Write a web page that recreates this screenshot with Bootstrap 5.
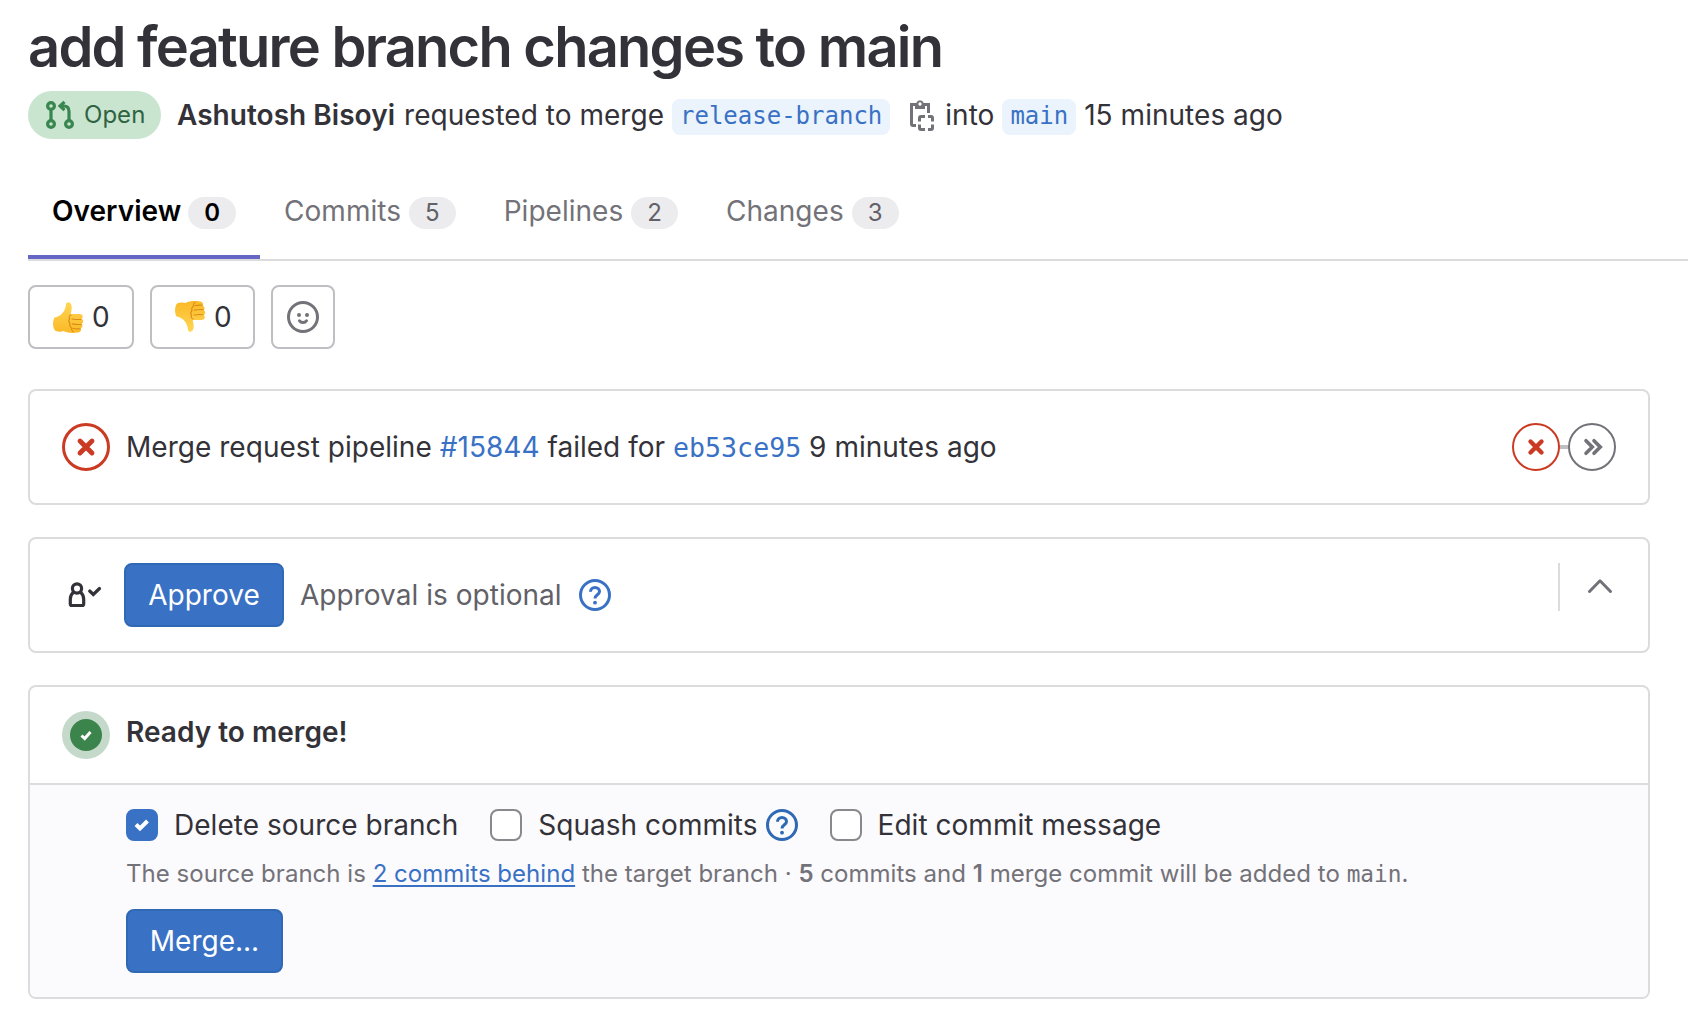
<!DOCTYPE html>
<html lang="en">
<head>
<meta charset="utf-8">
<title>add feature branch changes to main</title>
<meta name="viewport" content="width=device-width, initial-scale=1">
<link href="https://cdn.jsdelivr.net/npm/bootstrap@5.3.0/dist/css/bootstrap.min.css" rel="stylesheet">
<style>
  body { font-family: Inter, "Liberation Sans", sans-serif; font-size: 28px; line-height: 40px; letter-spacing: .03px; color: #333238; background: #fff; overflow: hidden; }
  svg { display: block; flex: none; }
  a { color: #3971c5; text-decoration: none; }
  .page { padding-left: 28px; }
  .code-face { font-family: "DejaVu Sans Mono", monospace; letter-spacing: 0; }
  .mr-title { font-size: 56px; line-height: 64px; font-weight: 600; letter-spacing: -1.76px; padding-top: 15px; margin: 0 0 12px; }
  .state-pill { height: 48px; width: 133px; border-radius: 24px; background: #c9e5d0; color: #2f6341; font-size: 24px; padding-left: 17px; margin-right: 16px; gap: 9px; }
  .meta-row { height: 48px; white-space: pre; }
  .meta-row .who { margin-right: 9px; }
  .meta-row .word { margin-right: 8px; }
  .copy-icon { margin: 0 11px 0 20px; }
  .branch-chip { background: #ebf3fc; border-radius: 8px; height: 36px; line-height: 35px; font-size: 24px; padding: 0 8px; margin-top: 4px; }
  .mr-tabs { height: 122px; border-bottom: 2px solid #dcdcde; }
  .mr-tabs .nav-link { display: flex; align-items: flex-start; gap: 8px; height: 120px; padding: 52px 24px 0; color: #737278; border-bottom: 4px solid transparent; }
  .mr-tabs .nav-link.active { color: #000; font-weight: 600; border-color: #6666c4; gap: 7px; }
  .count-pill { background: #ececef; border-radius: 16px; height: 32px; margin-top: 6px; line-height: 32px; padding: 0 16px; font-size: 24px; color: #626168; }
  .active .count-pill { color: #000; }
  .reactions { margin: 24px 0 40px; gap: 16px; }
  .react-btn { height: 64px; width: 64px; border: 2px solid #bfbfc3; border-radius: 8px; padding: 0; color: #333238; background: #fff; font-size: 28px; line-height: 1; gap: 8px; }
  .react-vote { width: 106px; padding-left: 22px; }
  .react-vote + .react-vote { width: 105px; }
  .flip { transform: scaleY(-1); }
  .widget { border: 2px solid #dcdcde; border-radius: 8px; width: 1622px; }
  .widget + .widget { margin-top: 32px; }
  .widget-row { height: 112px; padding: 0 32px; }
  .widget-head { height: 96px; padding: 24px 32px; gap: 16px; line-height: 43px; }
  .blue-btn { height: 64px; width: 160px; padding: 0; font-size: 28px; background: #3971c5; border: 2px solid #2f68b4; border-radius: 8px; color: #fff; }
  .collapse-box { height: 48px; border-left: 2px solid #dcdcde; margin-bottom: 16px; padding-left: 24px; }
  .opts { background: #fbfafd; border-top: 2px solid #dcdcde; height: 214px; padding: 24px 0 0 96px; border-radius: 0 0 6px 6px; }
  .tick { width: 32px; height: 32px; margin: 0 16px 0 32px; border: 2px solid #89888d; border-radius: 8px; flex: none; background: #fff; }
  .tick-on { background: #3971c5; border-color: #3971c5; margin-left: 0; }
  .note { font-size: 24px; line-height: 32px; color: #737278; margin: 17px 0 19px; white-space: nowrap; }
  .note a { text-decoration: underline; text-underline-offset: 3px; text-decoration-thickness: 2px; }
</style>
</head>
<body>
<main class="page">
  <h1 class="mr-title">add feature branch changes to main</h1>
  <div class="meta-row d-flex align-items-center">
    <span class="state-pill d-flex align-items-center">
      <svg width="30" height="30" viewBox="0 0 30 30" fill="none" stroke="#3a8650" stroke-width="3.2"><circle cx="6" cy="6" r="3.400"/><circle cx="6" cy="24" r="3.400"/><circle cx="24" cy="24" r="3.400"/><path d="M6 9.500v11M24 20.500V11.500c0-3.700-2-5.500-5-5.500h-3"/><path d="M19.500 1.800 15 6l4.500 4.200"/></svg>
      <span>Open</span>
    </span>
    <strong class="who fw-semibold">Ashutosh Bisoyi</strong><span class="word">requested to merge</span>
    <a href="#" class="branch-chip code-face">release-branch</a>
    <svg class="copy-icon" width="24" height="32" viewBox="0 0 24 32" fill="none" stroke="#737278" stroke-width="3"><path d="M6 26.500H3q-1.500 0-1.500-1.500V5.500H6M14 5.500h4.500V14"/><path d="M5 10V4h1.300a3.900 3.900 0 0 1 7.400 0H15v6z" fill="#737278" stroke="none"/><circle cx="10" cy="5" r="1.700" fill="#fff" stroke="none"/><path d="M9.500 22.500v-3.500q0-1.500 1.500-1.500h4M18 17.500h3q1.500 0 1.500 1.500v3.500M22.500 25.500V29q0 1.500-1.500 1.500h-3M15 30.500h-4q-1.500 0-1.500-1.500v-3.500"/></svg>
    <span class="word">into</span>
    <a href="#" class="branch-chip code-face me-2">main</a>
    <span>15 minutes ago</span>
  </div>
  <nav class="nav mr-tabs flex-nowrap">
    <a class="nav-link active" href="#">Overview <span class="count-pill">0</span></a>
    <a class="nav-link" href="#">Commits <span class="count-pill">5</span></a>
    <a class="nav-link" href="#">Pipelines <span class="count-pill">2</span></a>
    <a class="nav-link" href="#">Changes <span class="count-pill">3</span></a>
  </nav>

  <svg width="0" height="0" class="position-absolute">
    <defs>
      <linearGradient id="skin" x1="0" y1="0" x2="0" y2="1"><stop offset="0" stop-color="#ffd654"/><stop offset="1" stop-color="#fab927"/></linearGradient>
      <symbol id="hand" viewBox="0 0 32 34">
        <path d="M2.500 17.500c3-.8 6-1.500 8-4.500 2-2.300 3-5 3.500-8.500.4-3.200 4.300-3.200 5.500 1 .6 3-.2 5.500-.8 8.500h8.800c3.500 0 4.300 3.300 2 4.700 2.500 1.200 2.200 4 .2 5 1.500 1.500 1 4-1 4.500 1 2-.2 4-2.700 4.300-5.500.8-10.500.5-14.500-1.500-3 1-6 .8-8.500-.6-2.500-3.300-2.500-9.300-.5-12.900z" fill="url(#skin)"/>
        <path d="M29 19.200c-3 .7-6 .3-9-.2M29.300 24.200c-3 .6-6 .2-9-.3M28.200 28.700c-3 .4-5 .1-7.500-.4M19 15c-1.500.4-2.500 2-1.500 3.800-1.200 1.500-.5 3.500.5 4.500-.8 2 .2 3.500 1.200 4.300 0 1.800.8 3.200 2 4" fill="none" stroke="#dc8c16" stroke-width="1.100" stroke-linecap="round"/>
      </symbol>
      <symbol id="help" viewBox="0 0 32 32"><circle cx="16" cy="16" r="14.500" fill="none" stroke="currentColor" stroke-width="3"/><path d="M11.500 12.800c0-2.600 2-4.300 4.500-4.300s4.500 1.700 4.500 4c0 3.300-4.500 3.300-4.500 7" fill="none" stroke="currentColor" stroke-width="3"/><circle cx="16" cy="23.700" r="1.900" fill="currentColor"/></symbol>
    </defs>
  </svg>

  <div class="reactions d-flex">
    <button class="btn react-btn react-vote d-flex align-items-center"><svg width="32" height="34"><use href="#hand"/></svg><span>0</span></button>
    <button class="btn react-btn react-vote d-flex align-items-center"><svg class="flip" width="32" height="34"><use href="#hand"/></svg><span>0</span></button>
    <button class="btn react-btn d-flex align-items-center justify-content-center"><svg width="32" height="32" viewBox="0 0 32 32" fill="none" stroke="#737278" stroke-width="3"><circle cx="16" cy="16" r="14.500"/><circle cx="12" cy="14" r="2" fill="#737278" stroke="none"/><circle cx="20" cy="14" r="2" fill="#737278" stroke="none"/><path d="M12.500 19.800c1.500 2.400 5.500 2.400 7 0" stroke-linecap="round"/></svg></button>
  </div>

  <section class="widget">
    <div class="widget-row d-flex align-items-center">
      <svg width="48" height="48" viewBox="0 0 48 48" fill="none" stroke="#cb3a22" class="me-3"><circle cx="24" cy="24" r="22.500" stroke-width="3"/><path d="M18 18 30 30M30 18 18 30" stroke-width="4.800" stroke-linecap="round"/></svg>
      <div class="flex-grow-1">Merge request pipeline <a href="#">#15844</a> failed for <a href="#" class="code-face" style="font-size:26.6px;line-height:1">eb53ce95</a> 9 minutes ago</div>
      <svg width="104" height="48" viewBox="0 0 104 48" fill="none"><path d="M47 24h10" stroke="#bfbfc3" stroke-width="4"/><circle cx="24" cy="24" r="23" stroke="#cb3a22" stroke-width="2"/><path d="M18.500 18.500 29.500 29.500M29.500 18.500 18.500 29.500" stroke="#cb3a22" stroke-width="4.400" stroke-linecap="round"/><circle cx="80" cy="24" r="23" stroke="#737278" stroke-width="2"/><path d="m74 17.700 6.300 6.300-6.300 6.300M82 17.700l6.300 6.300-6.300 6.300" stroke="#737278" stroke-width="3.600" stroke-linecap="round"/></svg>
    </div>
  </section>

  <section class="widget">
    <div class="widget-row d-flex align-items-center">
      <svg width="62" height="32" viewBox="0 0 62 32" fill="none" stroke="#333238" stroke-width="3.200"><circle cx="15" cy="9.500" r="4.600"/><path d="M11.300 13.500c-2.400 1.800-3 4-3 7V25q0 1.500 1.500 1.500h10.400q1.500 0 1.500-1.500v-4.500c0-3-.6-5.200-3-7"/><path d="m27.700 12 3.600 3.500 6.200-6" stroke-linecap="round"/></svg>
      <button class="btn blue-btn me-3">Approve</button>
      <span style="color:#626168">Approval is optional</span>
      <svg width="32" height="32" style="margin-left:17px;color:#3971c5"><use href="#help"/></svg>
      <div class="collapse-box ms-auto d-flex align-items-center"><svg width="32" height="32" viewBox="0 0 32 32" fill="none" stroke="#737278" stroke-width="3" stroke-linecap="round" stroke-linejoin="round"><path d="M5.500 20.500 16 9.800l10.500 10.700"/></svg></div>
    </div>
  </section>

  <section class="widget">
    <div class="widget-head d-flex">
      <svg width="48" height="48" viewBox="0 0 48 48"><circle cx="24" cy="24" r="24" fill="#c5d9cb"/><circle cx="24" cy="24" r="16" fill="#3b844c"/><path d="m19.500 24.500 3.200 3 5.800-6.500" fill="none" stroke="#fff" stroke-width="3"/></svg>
      <span class="fw-semibold">Ready to merge!</span>
    </div>
    <div class="opts">
      <div class="d-flex align-items-center" style="height:32px">
        <span class="tick tick-on d-flex align-items-center justify-content-center"><svg width="18" height="16" viewBox="0 0 18 16"><path d="m3 7.500 4 4L14.500 4" fill="none" stroke="#fff" stroke-width="4"/></svg></span><span>Delete source branch</span>
        <span class="tick"></span><span>Squash commits</span>
        <svg class="ms-2" width="32" height="32" style="color:#2f68b4"><use href="#help"/></svg>
        <span class="tick"></span><span>Edit commit message</span>
      </div>
      <p class="note">The source branch is <a href="#">2 commits behind</a> the target branch · <b class="fw-semibold">5</b> commits and <b class="fw-semibold">1</b> merge commit will be added to <span class="code-face" style="font-size:22.8px;line-height:1">main</span>.</p>
      <button class="btn blue-btn" style="width:157px">Merge...</button>
    </div>
  </section>
</main>
<script src="https://cdn.jsdelivr.net/npm/bootstrap@5.3.0/dist/js/bootstrap.bundle.min.js"></script>
</body>
</html>
